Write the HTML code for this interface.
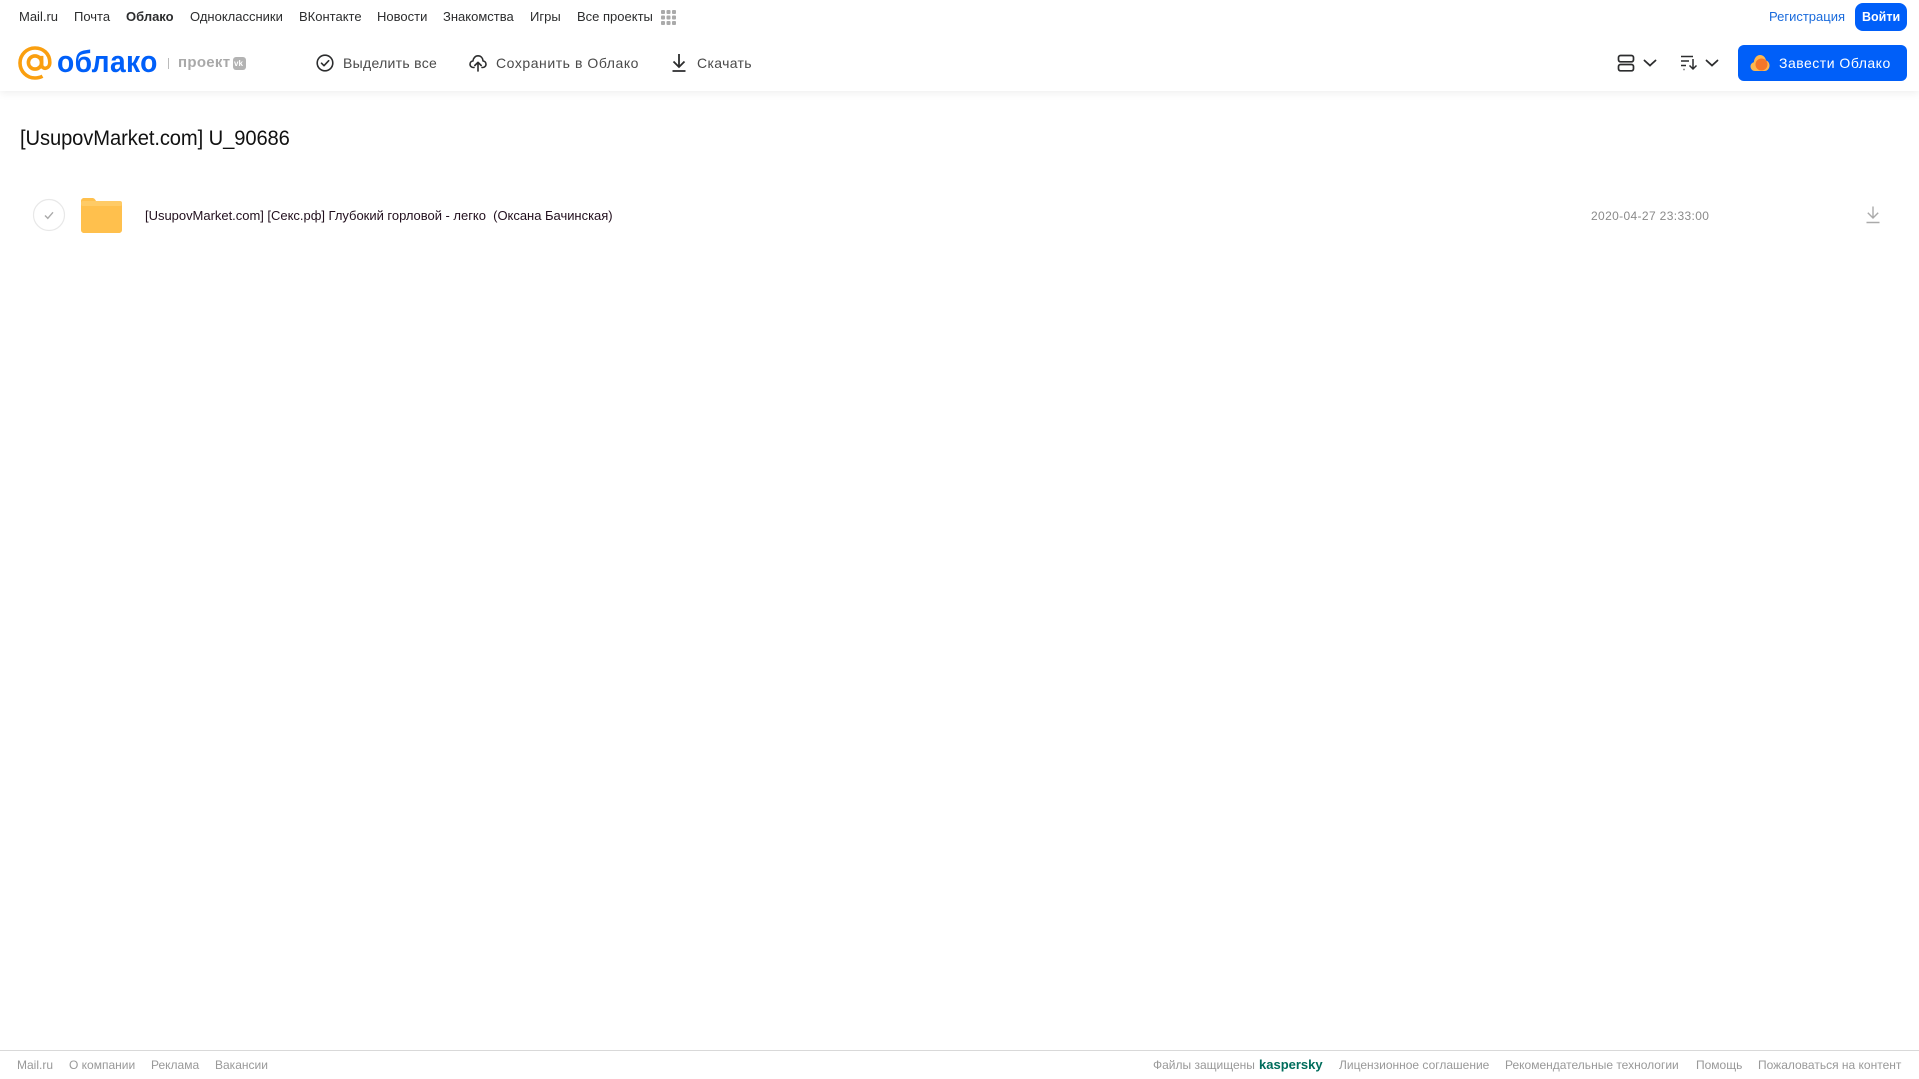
<!DOCTYPE html>
<html lang="ru"><head><meta charset="utf-8"><title>Облако</title>
<style>
html,body{margin:0;padding:0;background:#fff;width:1919px;height:1079px;overflow:hidden;font-family:"Liberation Sans","Noto Sans CJK SC",sans-serif}
.t{position:absolute;white-space:pre;line-height:20px;color:#333}
.n{font-size:13px;top:7px;color:#2c2d2e}
.b{font-size:14px;top:53px;color:#4a4a4a}
.f{font-size:12px;top:1055px;color:#999}
svg{position:absolute}
#hdr{position:absolute;left:0;top:0;width:1919px;height:91px;background:#fff;box-shadow:0 2px 8px rgba(0,0,0,.07)}
</style></head><body>
<div id="hdr"></div>
<div class="t n" style="left:19px">Mail.ru</div>
<div class="t n" style="left:74px">Почта</div>
<div class="t n" style="left:126px;font-weight:bold">Облако</div>
<div class="t n" style="left:190px">Одноклассники</div>
<div class="t n" style="left:299px">ВКонтакте</div>
<div class="t n" style="left:377px">Новости</div>
<div class="t n" style="left:443px">Знакомства</div>
<div class="t n" style="left:530px">Игры</div>
<div class="t n" style="left:577px">Все проекты</div>
<svg style="left:661px;top:10px" width="15" height="15" fill="#aaa"><rect x="0" y="0" width="4" height="4" rx="1"/><rect x="5.5" y="0" width="4" height="4" rx="1"/><rect x="11" y="0" width="4" height="4" rx="1"/><rect x="0" y="5.5" width="4" height="4" rx="1"/><rect x="5.5" y="5.5" width="4" height="4" rx="1"/><rect x="11" y="5.5" width="4" height="4" rx="1"/><rect x="0" y="11" width="4" height="4" rx="1"/><rect x="5.5" y="11" width="4" height="4" rx="1"/><rect x="11" y="11" width="4" height="4" rx="1"/></svg>
<svg style="left:18px;top:46px" width="34" height="34" viewBox="0 0 34 34" fill="none" stroke="#fa9f0f" stroke-width="3.6"><circle cx="17" cy="16.5" r="6.6"/><path d="M23.6 9.9v8.6c0 5.6 8.200 5 8.200-2C31.800 7.500 25 2 17 2 8.700 2 2 8.700 2 17s6.700 15 15 15c2.900 0 5.300-.6 7.500-1.800"/></svg>
<div class="t" style="left:57px;top:50px;line-height:24px;font-size:31px;font-weight:bold;color:#005ff9;letter-spacing:.4px;transform:scaleX(.91);transform-origin:0 0">облако</div>
<div style="position:absolute;left:168px;top:58px;width:1px;height:11px;background:#bbb"></div>
<div class="t" style="left:178px;top:53px;font-size:15px;font-weight:bold;color:#a9a9a9;letter-spacing:.3px">проект</div>
<div style="position:absolute;left:233px;top:57px;width:13px;height:13px;border-radius:3px;background:#b3b3b3"></div>
<div class="t" style="left:234px;top:57px;line-height:13px;font-size:8px;font-weight:bold;color:#fff">vk</div>
<svg style="left:316px;top:54px" width="18" height="18" fill="none" stroke="#2c2d2e" stroke-width="1.6"><circle cx="9" cy="9" r="7.800"/><path d="M5.500 9.200l2.500 2.500 4.700-5" stroke-linecap="round" stroke-linejoin="round"/></svg>
<div class="t b" style="left:343px;letter-spacing:.3px">Выделить все</div>
<svg style="left:469px;top:54px" width="18" height="18" fill="none" stroke="#2c2d2e" stroke-width="1.600" stroke-linecap="round" stroke-linejoin="round"><path d="M5 13.500H4.500C2.500 13.500 1 12 1 10.200c0-1.700 1.200-3 2.900-3.200C4.300 4 6.300 1.800 9 1.800c2.900 0 4.800 2.200 5.100 5.200 1.700.2 2.900 1.500 2.900 3.200 0 1.800-1.500 3.300-3.500 3.300H13"/><path d="M9 17V8.500M5.800 11.500L9 8.300l3.200 3.200"/></svg>
<div class="t b" style="left:496px;letter-spacing:.55px">Сохранить в Облако</div>
<svg style="left:671px;top:54px" width="16" height="18" fill="none" stroke="#2c2d2e" stroke-width="1.800"><path d="M8 0v12.500M2.500 7.500L8 13l5.500-5.500M1.500 17h13"/></svg>
<div class="t b" style="left:697px;letter-spacing:.35px">Скачать</div>

<svg style="left:1617px;top:54px" width="18" height="18" fill="none" stroke="#2c2d2e" stroke-width="1.700"><rect x="1.500" y="1.500" width="15" height="6.300" rx="2"/><rect x="1.500" y="10.500" width="15" height="6.300" rx="2"/></svg>
<svg style="left:1643px;top:59px" width="14" height="9" fill="none" stroke="#2c2d2e" stroke-width="1.800" stroke-linecap="round"><path d="M1.500 1.500L7 6.500l5.500-5"/></svg>
<svg style="left:1680px;top:55px" width="18" height="16" fill="none" stroke="#2c2d2e" stroke-width="1.500"><path d="M1 1.500h12M1 6h8M1 10.500h5M3.500 14.500h1M13 4v10M9.500 10.500L13 14l3.500-3.500"/></svg>
<svg style="left:1705px;top:59px" width="14" height="9" fill="none" stroke="#2c2d2e" stroke-width="1.800" stroke-linecap="round"><path d="M1.500 1.500L7 6.500l5.500-5"/></svg>
<div style="position:absolute;left:1738px;top:45px;width:169px;height:36px;border-radius:6px;background:#005ff9"></div>
<svg style="left:1750px;top:54px" width="20" height="18"><path d="M5 17C2 17 .5 14.500.5 12.500c0-2.500 1.800-4 3.300-4.300C4.300 3.700 7 1 10 1c3.500 0 5.500 2.700 6 5.500 2.200.5 3.500 2.700 3.500 5 0 3-2 5.500-5 5.500z" fill="#ffb74d"/><circle cx="11.500" cy="10.500" r="6" fill="#f4762a"/></svg>
<div class="t" style="left:1779px;top:53px;font-size:14px;color:#fff;letter-spacing:.5px">Завести Облако</div>
<div class="t n" style="left:1769px;color:#1a6bdc">Регистрация</div>
<div style="position:absolute;left:1855px;top:3px;width:52px;height:28px;border-radius:8px;background:#005ff9"></div>
<div class="t" style="left:1862px;top:7px;font-size:12.5px;font-weight:bold;color:#fff">Войти</div>

<div class="t" style="left:20px;top:129px;font-size:21px;color:#111;letter-spacing:-.1px;transform:scaleX(.96);transform-origin:0 0">[UsupovMarket.com] U_90686</div>
<svg style="left:32px;top:198px" width="34" height="34" fill="none"><circle cx="17" cy="17" r="15.500" stroke="#e8e8e8" stroke-width="1.200"/><path d="M13 17.500l2.800 2.800 5.200-6" stroke="#aaa" stroke-width="1.400"/></svg>
<svg style="left:81px;top:198px" width="41" height="35"><path d="M0 3C0 1.300 1.300 0 3 0h8c1.800 0 3 .8 4 3h23c1.700 0 3 1.300 3 3v26c0 1.700-1.300 3-3 3H3c-1.700 0-3-1.300-3-3z" fill="#ffc04d"/><rect x="0" y="3" width="41" height="5" fill="#ffcb66" rx="2"/></svg>
<div class="t" style="left:145px;top:206px;font-size:13px;color:#22101e;letter-spacing:-.02px">[UsupovMarket.com] [Секс.рф] Глубокий горловой - легко  (Оксана Бачинская)</div>
<div class="t" style="left:1591px;top:206px;font-size:12px;color:#8a8a8a;letter-spacing:.36px">2020-04-27 23:33:00</div>
<svg style="left:1866px;top:206px" width="14" height="18" fill="none" stroke="#aaa" stroke-width="1.400"><path d="M7 .5v11M1.800 6.800L7 12l5.200-5.200M.5 16.500h13"/></svg>

<div style="position:absolute;left:0;top:1050px;width:1919px;height:1px;background:#d9d9d9"></div>
<div class="t f" style="left:17px">Mail.ru</div>
<div class="t f" style="left:69px">О компании</div>
<div class="t f" style="left:151px">Реклама</div>
<div class="t f" style="left:215px">Вакансии</div>
<div class="t f" style="left:1153px">Файлы защищены</div>
<div class="t f" style="left:1259px;font-size:13px;font-weight:bold;color:#006d5c">kaspersky</div>
<div class="t f" style="left:1339px">Лицензионное соглашение</div>
<div class="t f" style="left:1505px">Рекомендательные технологии</div>
<div class="t f" style="left:1696px">Помощь</div>
<div class="t f" style="left:1758px">Пожаловаться на контент</div>
</body></html>
